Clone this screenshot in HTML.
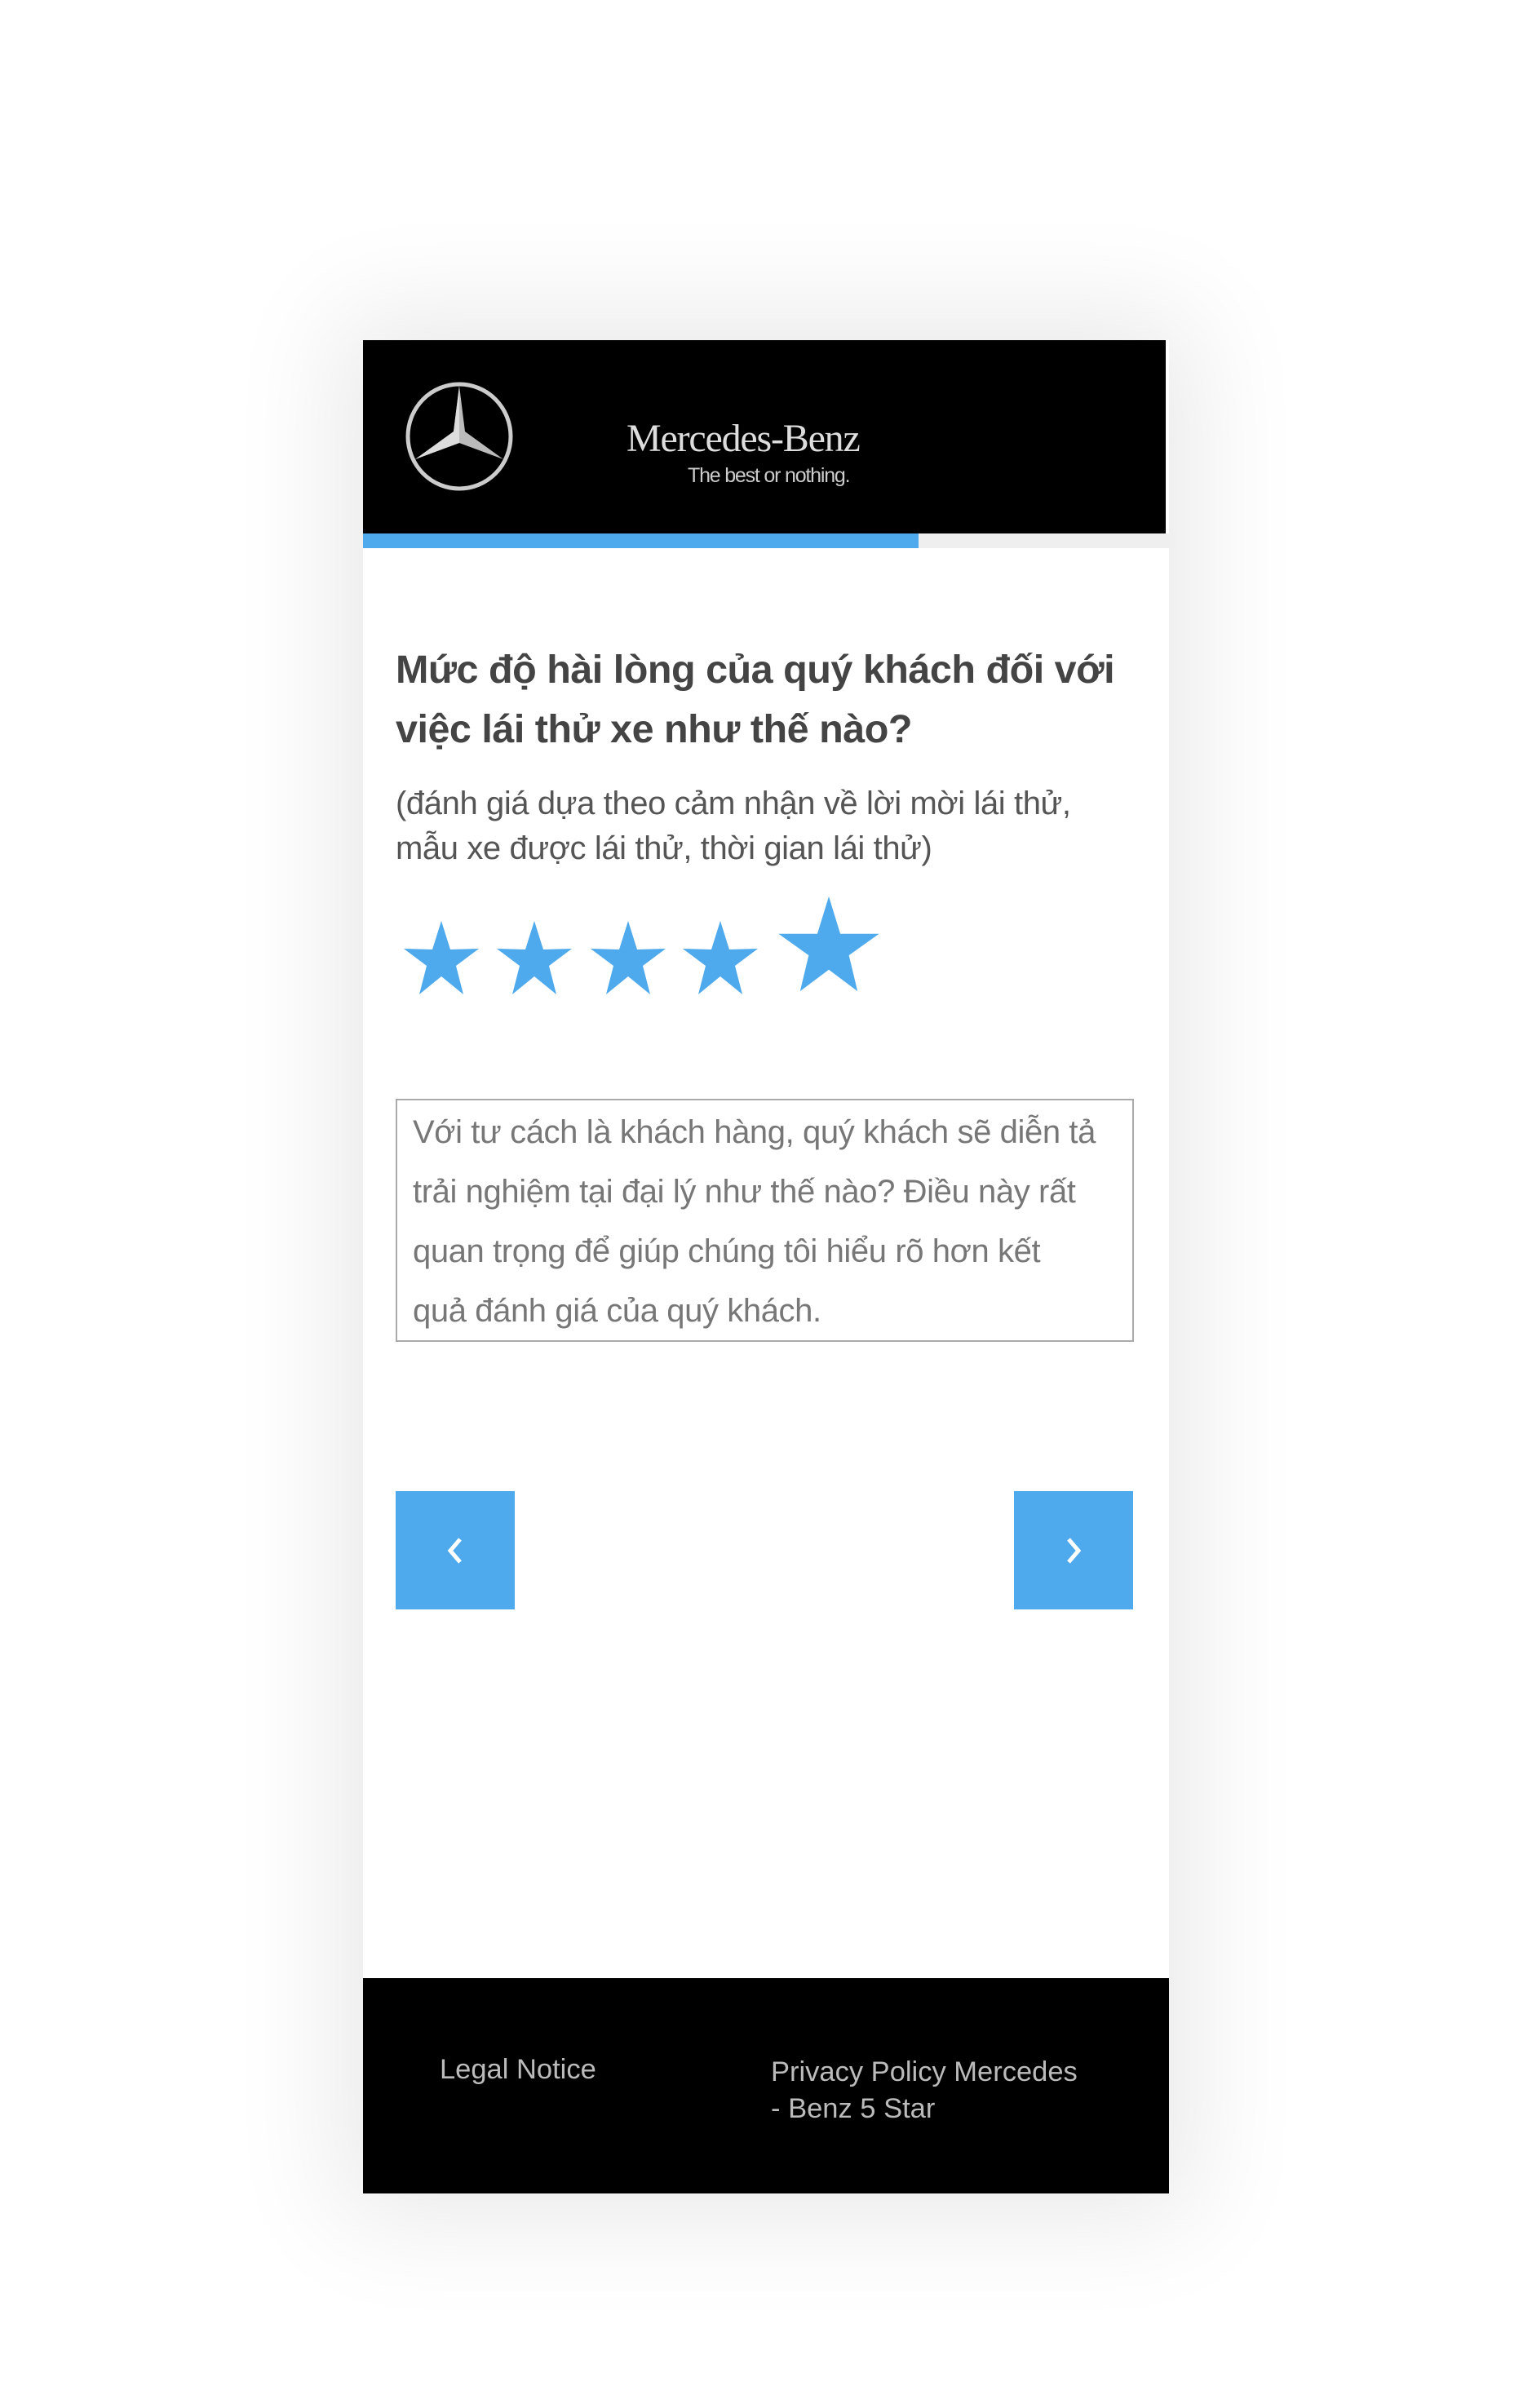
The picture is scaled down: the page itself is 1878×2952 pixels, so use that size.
<!DOCTYPE html>
<html><head><meta charset="utf-8">
<style>
html,body{margin:0;padding:0;background:#fff;}
body{width:1878px;height:2952px;position:relative;overflow:hidden;font-family:"Liberation Sans",sans-serif;}
.card{position:absolute;left:445px;top:417px;width:988px;height:2272px;background:#fff;box-shadow:0 0 160px 30px rgba(0,0,0,0.09);}
.hdr{position:absolute;left:0;top:0;width:984px;height:237px;background:#000;}
.prog{position:absolute;left:0;top:237px;width:988px;height:18px;background:#efefef;}
.prog div{width:681px;height:100%;background:#4eaaec;}
.abs{position:absolute;white-space:nowrap;}
.title{left:40px;top:368px;font-size:48.5px;font-weight:bold;color:#444;line-height:73px;letter-spacing:-0.5px;}
.sub{left:40px;top:541px;font-size:40px;color:#555;line-height:55px;letter-spacing:-0.4px;}
.ta{position:absolute;left:40px;top:930px;width:905px;height:298px;border:2px solid #aaa;box-sizing:border-box;}
.ta div{position:absolute;left:19px;top:3px;font-size:40px;color:#777;line-height:73px;white-space:nowrap;letter-spacing:-0.4px;}
.btn{position:absolute;top:1411px;width:146px;height:145px;background:#4eaaec;}
.foot{position:absolute;left:0;width:988px;background:#000;color:#bbb;font-size:34.5px;}
</style></head><body>
<div class="card">
 <div class="hdr">
  <svg style="position:absolute;left:50px;top:50px" width="136" height="136" viewBox="0 0 136 136">
   <ellipse cx="68" cy="68" rx="63" ry="64" fill="none" stroke="#ccc" stroke-width="5"/>
   <path d="M68 6 L75 62 L122 96 L68 76 L14 96 L61 62 Z" fill="#bbb"/>
   <path d="M68 6 L68 76 L14 96 L61 62 Z" fill="#ddd"/>
  </svg>
  <div class="abs" style="left:323px;top:93px;font-family:'Liberation Serif',serif;font-size:48px;color:#ddd;letter-spacing:-1.2px;">Mercedes-Benz</div>
  <div class="abs" style="left:398px;top:152px;font-size:25px;color:#ccc;letter-spacing:-1.2px;">The best or nothing.</div>
 </div>
 <div class="prog"><div></div></div>
 <div class="abs title">Mức độ hài lòng của quý khách đối với<br>việc lái thử xe như thế nào?</div>
 <div class="abs sub">(đánh giá dựa theo cảm nhận về lời mời lái thử,<br>mẫu xe được lái thử, thời gian lái thử)</div>
 <svg style="position:absolute;left:40px;top:672px" width="640" height="150" viewBox="0 0 640 150">
  <g fill="#4eaaec">
   <path id="s" d="M56 40 L67 75 L102 74 L74 95 L83 130 L56 108 L29 130 L38 95 L10 74 L45 75 Z"/>
   <use href="#s" x="114"/><use href="#s" x="229"/><use href="#s" x="342"/>
   <path d="M0 0 L16 52 L70 52 L28 82 L40 132 L0 102 L-40 132 L-28 82 L-70 52 L-16 52 Z" transform="translate(531 10) scale(0.88)"/>
  </g>
 </svg>
 <div class="ta"><div>Với tư cách là khách hàng, quý khách sẽ diễn tả<br>trải nghiệm tại đại lý như thế nào? Điều này rất<br>quan trọng để giúp chúng tôi hiểu rõ hơn kết<br>quả đánh giá của quý khách.</div></div>
 <div class="btn" style="left:40px"><svg width="146" height="145"><path d="M79 59 L67 73 L79 87" fill="none" stroke="#fff" stroke-width="5"/></svg></div>
 <div class="btn" style="left:798px"><svg width="146" height="145"><path d="M67 59 L79 73 L67 87" fill="none" stroke="#fff" stroke-width="5"/></svg></div>
 <div class="foot" style="top:2008px;height:264px">
  <div class="abs" style="left:94px;top:93px">Legal Notice</div>
  <div class="abs" style="left:500px;top:93px;line-height:45px">Privacy Policy Mercedes<br>- Benz 5 Star</div>
 </div>
</div>
</body></html>
